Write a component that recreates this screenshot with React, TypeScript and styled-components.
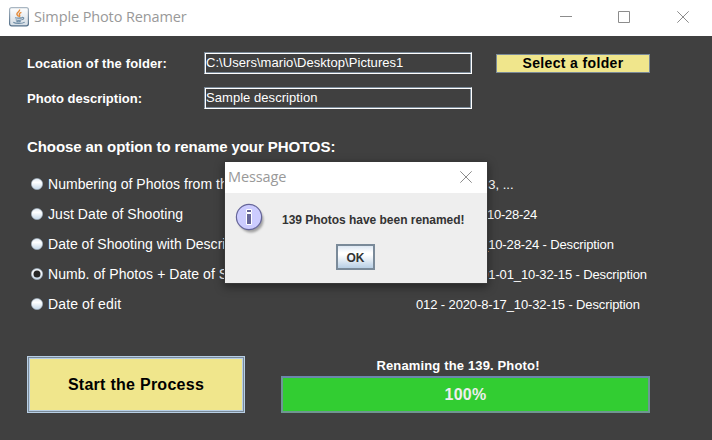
import React from 'react';
import styled, { createGlobalStyle } from 'styled-components';

const GlobalStyle = createGlobalStyle`
  * { box-sizing: border-box; }
  body { margin: 0; background: #404040; }
  button, input { font: inherit; margin: 0; padding: 0; border-radius: 0; }
`;

const Window = styled.div`
  position: relative;
  width: 712px;
  height: 440px;
  overflow: hidden;
  background: #404040;
  color: #fff;
  font-family: "Liberation Sans", Arial, sans-serif;
  white-space: nowrap;
`;

const TitleBar = styled.header`
  display: flex;
  align-items: center;
  height: 36px;
  padding: 0 23px 2px 9px;
  background: #fff;
`;

const WindowTitle = styled.h1`
  flex: 1;
  margin: 0;
  font: 400 14.5px/22px "Open Sans", "Noto Sans", sans-serif;
  letter-spacing: -0.12px;
  color: #999;
`;

const DialogHeading = styled(WindowTitle)`
  letter-spacing: -0.1px;
`;

const AppIcon = styled.svg`
  width: 20px;
  height: 20px;
  margin-right: 5px;
`;

const Controls = styled.div`
  display: flex;
  gap: 46px;

  svg:last-child {
    margin-left: 1px;
  }
`;

const Glyph = styled.svg`
  display: block;
  width: 12px;
  height: 12px;
  fill: none;
  stroke: #8c8c8c;
`;

const Content = styled.main`
  display: flex;
  flex-direction: column;
  height: 404px;
  padding: 16px 62px 27px 27px;
`;

const Form = styled.div`
  display: grid;
  grid-template-columns: 177px 268px 154px;
  grid-template-rows: 22px 22px;
  row-gap: 13px;
  align-items: center;
`;

const Label = styled.label<{ $spacing: number }>`
  padding-top: 1px;
  font-size: 13px;
  font-weight: 700;
  line-height: 22px;
  letter-spacing: ${p => p.$spacing}px;
`;

const Field = styled.input`
  && {
    width: 268px;
    height: 22px;
    padding: 0 0 1px 1px;
    font-size: 13px;
    line-height: 17px;
    letter-spacing: 0.05px;
  }
  color: #fff;
  background: #404040;
  border: 1px solid;
  border-color: #7a8a99 #fff #fff #7a8a99;
  box-shadow: inset 1px 1px #fff, inset -1px -1px #7a8a99;
  outline: 0;
`;

const FolderButton = styled.button`
  && {
    margin-left: 24px;
    font-size: 14px;
    font-weight: 700;
    line-height: 16px;
    letter-spacing: 0.35px;
  }
  width: 154px;
  height: 19px;
  color: #000;
  background: #f0e68c;
  border: 1px solid #7a8a99;
`;

const Heading = styled.h2`
  margin: 28px 0 12px;
  font-size: 15px;
  line-height: 20px;
  letter-spacing: -0.08px;
`;

const Options = styled.div`
  display: flex;
  flex-direction: column;
`;

const Option = styled.label`
  display: grid;
  grid-template-columns: 21px 368px auto;
  align-items: center;
  height: 30px;
`;

const RadioIcon = styled.svg`
  width: 12px;
  height: 12px;
  margin-left: 4px;
`;

const OptionName = styled.span<{ $spacing: number }>`
  font-size: 14px;
  letter-spacing: ${p => p.$spacing}px;
`;

const Sample = styled.span<{ $spacing: number }>`
  font-size: 13px;
  letter-spacing: ${p => p.$spacing}px;
`;

const Footer = styled.footer`
  display: flex;
  justify-content: space-between;
  align-items: flex-end;
  margin-top: auto;
`;

const StartButton = styled.button`
  && {
    font-size: 16px;
    font-weight: 700;
    letter-spacing: 0.27px;
    padding-top: 1px;
  }
  width: 218px;
  height: 57px;
  color: #000;
  background: #f0e68c;
  border: 1px solid #b8cfe5;
  box-shadow: inset 0 0 0 1px #7a8a99, inset 0 0 0 2px #b8cfe5;
`;

const Progress = styled.section`
  width: 369px;
`;

const ProgressLabel = styled.div`
  padding-right: 15px;
  font-size: 13px;
  font-weight: 700;
  line-height: 20px;
  letter-spacing: 0.15px;
  text-align: center;
`;

const ProgressBar = styled.div`
  height: 37px;
  border: 2px solid;
  border-color: #6b87ad #6d9797 #6f9690 #6d9797;
  background: #32cd32;
  color: #eee;
  font-size: 16px;
  font-weight: 700;
  letter-spacing: 0.3px;
  line-height: 34px;
  text-align: center;
`;

const Dialog = styled.div`
  position: absolute;
  left: 225px;
  top: 162px;
  width: 262px;
  height: 121px;
  background: #eee;
  box-shadow: 0 0 0 1px #383838, 0 3px 9px 1px rgba(0, 0, 0, 0.42);
`;

const DialogTitle = styled.div`
  display: flex;
  align-items: center;
  height: 31px;
  padding: 0 15px 1px 3px;
  background: #fff;
`;

const DialogBody = styled.div`
  display: flex;
  align-items: center;
  height: 51px;
  padding: 3px 0 0 10px;
`;

const InfoIcon = styled.svg`
  width: 32px;
  height: 32px;
  margin: 0 15px 3px 0;
`;

const Message = styled.span`
  font-size: 12px;
  font-weight: 700;
  letter-spacing: -0.03px;
  color: #333;
`;

const OkButton = styled.button`
  && {
    font-size: 12px;
    font-weight: 700;
    padding-top: 1px;
  }
  display: block;
  width: 39px;
  height: 26px;
  margin-left: 111px;
  color: #333;
  border: 2px solid #7a8a99;
  background: linear-gradient(#dde8f3 0, #fff 30%, #fff 40%, #b8cfe5 100%);
`;

const options = [
  { name: 'Numbering of Photos from the oldest', sample: '001, 002, 003, ...', spacing: 0.03, sampleSpacing: 0 },
  { name: 'Just Date of Shooting', sample: '2020-01-01_10-28-24', spacing: 0.06, sampleSpacing: -0.25 },
  { name: 'Date of Shooting with Description', sample: '2020-01-01_10-28-24 - Description', spacing: 0.03, sampleSpacing: -0.14 },
  { name: 'Numb. of Photos + Date of Shooting', sample: '012 - 2020-01-01_10-32-15 - Description', spacing: 0.06, sampleSpacing: -0.12, checked: true },
  { name: 'Date of edit', sample: '012 - 2020-8-17_10-32-15 - Description', spacing: 0.13, sampleSpacing: -0.12 },
];

function CloseGlyph() {
  return <Glyph viewBox="0 0 12 12"><path d="M.3.3 11.7 11.7M11.7.3.3 11.7" /></Glyph>;
}

function JavaIcon() {
  return (
    <AppIcon viewBox="0 0 20 20" fill="none">
      <defs>
        <linearGradient id="tile" x2="0" y2="1">
          <stop stopColor="#fff" /><stop offset="1" stopColor="#d3dce4" />
        </linearGradient>
        <linearGradient id="edge" x2="0" y2="1">
          <stop stopColor="#a9b6c2" /><stop offset="1" stopColor="#536f89" />
        </linearGradient>
      </defs>
      <rect x=".6" y=".6" width="18.8" height="18.2" rx="2" fill="url(#tile)" stroke="url(#edge)" strokeWidth="1.2" />
      <path d="M10.5 2.5c.9 2-3.1 2.8-2.6 4.8.2.9 1.4 1.5 1.6 2.3M12.4 5.4c-3 1-1.9 2.2-1.7 3.1.1.6-.2 1-.6 1.4" stroke="#e58a38" strokeWidth="1.4" />
      <path d="M6 10.7c1.5.6 5.9.5 7.4-.1M6.7 12.8c1.7.6 4.3.6 5.8 0M7.4 14.4c1.5.4 3 .4 4.3 0M13.2 10.4c2.4-.3 1.8 2-.5 2.4M4.3 15.3c2.3 1.6 9 1.5 11.4-.2" stroke="#6f8da6" strokeWidth="1.15" />
    </AppIcon>
  );
}

function Radio({ checked }: { checked?: boolean }) {
  return (
    <RadioIcon viewBox="0 0 12 12">
      <defs>
        <linearGradient id="radio" x2="0" y2="1">
          <stop stopColor="#dde8f3" /><stop offset=".35" stopColor="#fff" /><stop offset="1" stopColor="#c3d7e9" />
        </linearGradient>
      </defs>
      <circle cx="6" cy="6" r="5.6" fill="url(#radio)" stroke="#a3b4c3" strokeWidth=".6" />
      {checked && <circle cx="6" cy="6" r="3.5" fill="#262626" />}
    </RadioIcon>
  );
}

export default function App() {
  return (
    <Window>
      <GlobalStyle />
      <TitleBar>
        <JavaIcon />
        <WindowTitle>Simple Photo Renamer</WindowTitle>
        <Controls>
          <Glyph viewBox="0 0 12 12"><path d="M0 5.5h12" /></Glyph>
          <Glyph viewBox="0 0 12 12"><path d="M.5.5h11v11H.5z" /></Glyph>
          <CloseGlyph />
        </Controls>
      </TitleBar>
      <Content>
        <Form>
          <Label $spacing={0.12} htmlFor="folder">Location of the folder:</Label>
          <Field id="folder" readOnly value="C:\Users\mario\Desktop\Pictures1" />
          <FolderButton>Select a folder</FolderButton>
          <Label $spacing={0.01} htmlFor="description">Photo description:</Label>
          <Field id="description" readOnly value="Sample description" />
        </Form>
        <Heading>Choose an option to rename your PHOTOS:</Heading>
        <Options>
          {options.map(option => (
            <Option key={option.name}>
              <Radio checked={option.checked} />
              <OptionName $spacing={option.spacing}>{option.name}</OptionName>
              <Sample $spacing={option.sampleSpacing}>{option.sample}</Sample>
            </Option>
          ))}
        </Options>
        <Footer>
          <StartButton>Start the Process</StartButton>
          <Progress>
            <ProgressLabel>Renaming the 139. Photo!</ProgressLabel>
            <ProgressBar>100%</ProgressBar>
          </Progress>
        </Footer>
      </Content>
      <Dialog role="dialog">
        <DialogTitle>
          <DialogHeading as="h3">Message</DialogHeading>
          <CloseGlyph />
        </DialogTitle>
        <DialogBody>
          <InfoIcon viewBox="0 0 32 32">
            <defs>
              <filter id="shade" x="-30%" y="-30%" width="160%" height="160%"><feGaussianBlur stdDeviation="1.3" /></filter>
            </defs>
            <circle cx="16" cy="17" r="12.5" fill="#777" opacity=".65" filter="url(#shade)" />
            <circle cx="14" cy="14" r="12.6" fill="#ccf" stroke="#669" strokeWidth="1.2" />
            <path d="M11.5 6.5h5v3h-5zM11.5 10.5h5v11h-5z" fill="#669" stroke="#fff" />
          </InfoIcon>
          <Message>139 Photos have been renamed!</Message>
        </DialogBody>
        <OkButton>OK</OkButton>
      </Dialog>
    </Window>
  );
}
